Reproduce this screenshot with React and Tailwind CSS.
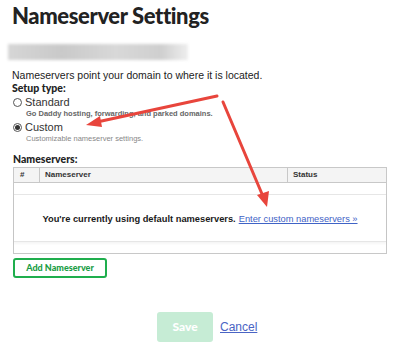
export default function App() {
  return (
    <div className="relative w-[400px] h-[351px] bg-white overflow-hidden" style={{ fontFamily: '"Liberation Sans", Arial, sans-serif' }}>
      <div className="pl-[12px]">
        <h1 className="h-[34px] pt-[3px] text-[22px] leading-[26px] font-black text-[#222] tracking-[-0.4px]" style={{ fontFamily: 'Lato, "Liberation Sans", sans-serif' }}>
          Nameserver Settings
        </h1>
        <div className="mt-[10px] ml-[-4px] h-[16px] w-[180px] blur-[1.5px] bg-[linear-gradient(90deg,#d6d6d6_0%,#c9c9c9_30%,#d8d8d8_60%,#cfcfcf_85%,#eeeeee_100%)]" />
        <p className="mt-[9px] text-[10.5px] leading-[13px] text-[#222]">Nameservers point your domain to where it is located.</p>
        <p className="text-[10.5px] leading-[12px] font-black text-[#222]" style={{ fontFamily: 'Lato, "Liberation Sans", sans-serif' }}>Setup type:</p>
        <div className="mt-[2px] flex items-center gap-[3px] h-[13px]">
          <span className="w-[9px] h-[9px] rounded-full border border-[#555] bg-white ml-[1px]" />
          <span className="text-[11px] text-[#333]">Standard</span>
        </div>
        <p className="pl-[14px] text-[7.5px] leading-[10px] font-bold text-[#666]">Go Daddy hosting, forwarding, and parked domains.</p>
        <div className="mt-[2px] flex items-center gap-[3px] h-[13px]">
          <span className="w-[9px] h-[9px] rounded-full border border-[#555] bg-white ml-[1px] flex items-center justify-center">
            <span className="w-[5px] h-[5px] rounded-full bg-[#333]" />
          </span>
          <span className="text-[11px] text-[#333]">Custom</span>
        </div>
        <p className="pl-[14px] text-[7.5px] leading-[10px] text-[#888]">Customizable nameserver settings.</p>
        <p className="mt-[9px] pl-[1px] text-[10.5px] leading-[12px] font-black text-[#222]" style={{ fontFamily: 'Lato, "Liberation Sans", sans-serif' }}>Nameservers:</p>
        <div className="mt-[2px] ml-[1px] w-[374px] border border-[#c8c8c8]">
          <div className="flex h-[15px] bg-[#f4f4f4] border-b border-[#c8c8c8] text-[8px] font-bold text-[#333] leading-[14px]">
            <div className="w-[26px] border-r border-[#c8c8c8] pl-[6px]">#</div>
            <div className="w-[248px] border-r border-[#c8c8c8] pl-[5px]">Nameserver</div>
            <div className="flex-1 pl-[5px]">Status</div>
          </div>
          <div className="h-[12px] border-b border-[#e6e6e6]" />
          <div className="h-[47px] flex items-center justify-center text-[9.3px] pt-[3px] border-b border-[#e6e6e6] shadow-[0_2px_2px_rgba(0,0,0,0.04)]">
            <span className="font-bold text-[#1a1a1a]">You're currently using default nameservers.</span>
            <span className="ml-[3px] text-[#3f63c6] underline">Enter custom nameservers »</span>
          </div>
          <div className="h-[11px]" />
        </div>
        <button className="mt-[3px] ml-[1px] w-[94px] h-[20px] border-2 border-[#1fae4d] rounded-[3px] text-[9px] font-black text-[#1a9d45]" style={{ fontFamily: 'Lato, "Liberation Sans", sans-serif' }}>
          Add Nameserver
        </button>
        <div className="mt-[34px] flex items-center">
          <div className="ml-[145px] w-[56px] h-[30px] rounded-[3px] bg-[#c6ecd5] flex items-center justify-center text-white font-black text-[12px]" style={{ fontFamily: 'Lato, "Liberation Sans", sans-serif' }}>Save</div>
          <span className="ml-[7px] text-[12px] text-[#4a64c4] underline">Cancel</span>
        </div>
      </div>
      <svg className="absolute inset-0 pointer-events-none" width="400" height="351">
        <line x1="217" y1="96" x2="97" y2="122" stroke="#e8453c" strokeWidth="3" strokeLinecap="round" />
        <polygon points="86,125 100,116 102,127" fill="#e8453c" />
        <line x1="223" y1="102" x2="262" y2="194" stroke="#e8453c" strokeWidth="3" strokeLinecap="round" />
        <polygon points="267,207 257,195 269,191" fill="#e8453c" />
      </svg>
    </div>
  );
}
